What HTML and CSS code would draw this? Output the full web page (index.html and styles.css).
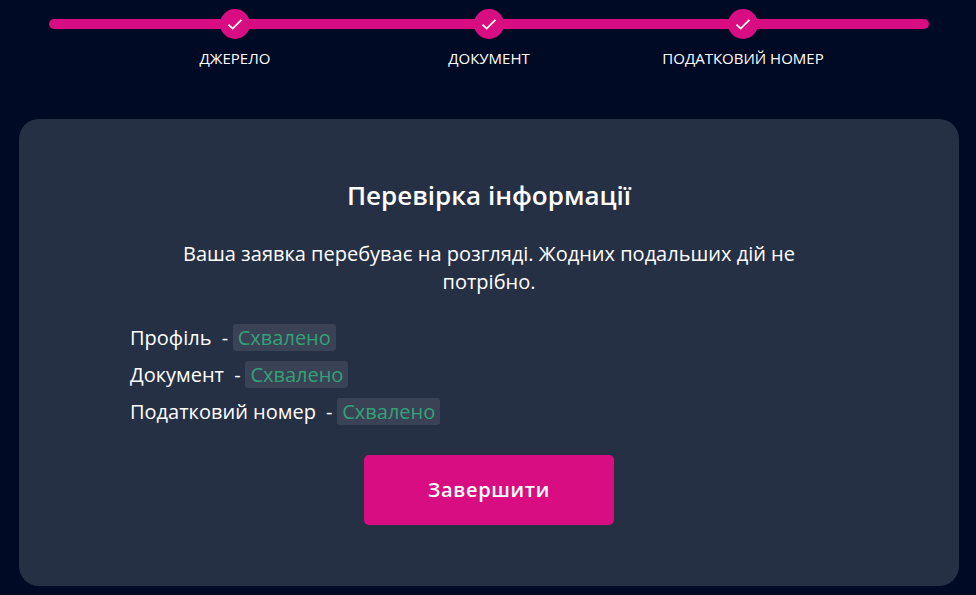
FILE: index.html
```html
<!DOCTYPE html>
<html lang="uk">
<head>
  <meta charset="UTF-8" />
  <meta name="viewport" content="width=device-width, initial-scale=1.0"/>
  <title>Перевірка інформації</title>
  <link rel="stylesheet" href="styles.css">
</head>
<body>

  <div class="page">
    <section class="stepper">
      <div class="stepper-track"></div>
      <div class="stepper-steps">
        <div class="step">
          <span class="step-circle">
            <svg viewBox="0 0 16 16" class="step-check"><path d="M1.5 8.6 5.7 12.6 14.4 3.8"/></svg>
          </span>
          <span class="step-label">ДЖЕРЕЛО</span>
        </div>
        <div class="step">
          <span class="step-circle">
            <svg viewBox="0 0 16 16" class="step-check"><path d="M1.5 8.6 5.7 12.6 14.4 3.8"/></svg>
          </span>
          <span class="step-label">ДОКУМЕНТ</span>
        </div>
        <div class="step">
          <span class="step-circle">
            <svg viewBox="0 0 16 16" class="step-check"><path d="M1.5 8.6 5.7 12.6 14.4 3.8"/></svg>
          </span>
          <span class="step-label">ПОДАТКОВИЙ НОМЕР</span>
        </div>
      </div>
    </section>

    <section class="card">
      <h1>Перевірка інформації</h1>
      <p class="card-text">Ваша заявка перебуває на розгляді. Жодних подальших дій не потрібно.</p>

      <ul class="status-list">
        <li class="status-row">Профіль <span class="status-dash">-</span> <span class="status-badge">Схвалено</span></li>
        <li class="status-row">Документ <span class="status-dash">-</span> <span class="status-badge">Схвалено</span></li>
        <li class="status-row">Податковий номер <span class="status-dash">-</span> <span class="status-badge">Схвалено</span></li>
      </ul>

      <button class="finish-btn">Завершити</button>
    </section>
  </div>

</body>
</html>
```

FILE: styles.css
```css
* {
  box-sizing: border-box;
  margin: 0;
  padding: 0;
}

html, body {
  height: 100%;
  overflow: hidden;
}

body {
  font-family: 'Open Sans', 'Noto Sans', sans-serif;
  background-color: #000a24;
  color: #fff;
}

.page {
  width: 940px;
  margin-left: 19px;
  padding-top: 9px;
}

/* Stepper */
.stepper {
  position: relative;
  height: 110px;
  padding: 0 89px;
}

.stepper-track {
  position: absolute;
  top: 10px;
  left: 30px;
  width: 880px;
  height: 10px;
  border-radius: 5px;
  background-color: #d90d82;
}

.stepper-steps {
  position: relative;
  display: grid;
  grid-template-columns: repeat(3, 254px);
}

.step {
  display: flex;
  flex-direction: column;
  align-items: center;
}

.step-circle {
  width: 30px;
  height: 30px;
  border-radius: 50%;
  background-color: #d90d82;
  display: flex;
  align-items: center;
  justify-content: center;
}

.step-check {
  width: 16px;
  height: 16px;
  fill: none;
  stroke: #fff;
  stroke-width: 1.8;
}

.step-label {
  margin-top: 9px;
  font-size: 15px;
  line-height: 20px;
}

/* Card */
.card {
  height: 467px;
  padding: 58px 111px 0;
  background-color: #263045;
  border-radius: 20px;
  display: flex;
  flex-direction: column;
  align-items: center;
}

h1 {
  font-size: 26px;
  line-height: 36px;
  font-weight: 600;
  text-align: center;
}

.card-text {
  width: 640px;
  margin-top: 27px;
  font-size: 20px;
  line-height: 28px;
  text-align: center;
}

.status-list {
  list-style: none;
  align-self: stretch;
  margin-top: 28px;
  display: flex;
  flex-direction: column;
  gap: 10px;
}

.status-row {
  font-size: 20px;
  line-height: 27px;
}

.status-dash {
  margin: 0 -0.5px 0 5px;
}

.status-badge {
  display: inline-block;
  padding: 0 5px;
  color: #35a076;
  background-color: #3a4356;
  border-radius: 3px;
}

.finish-btn {
  width: 250px;
  height: 70px;
  margin-top: 30px;
  padding-bottom: 2px;
  border: none;
  border-radius: 5px;
  background-color: #d90d82;
  color: #fff;
  font-family: inherit;
  font-size: 20px;
  font-weight: 600;
  letter-spacing: 0.7px;
  cursor: pointer;
}
```
